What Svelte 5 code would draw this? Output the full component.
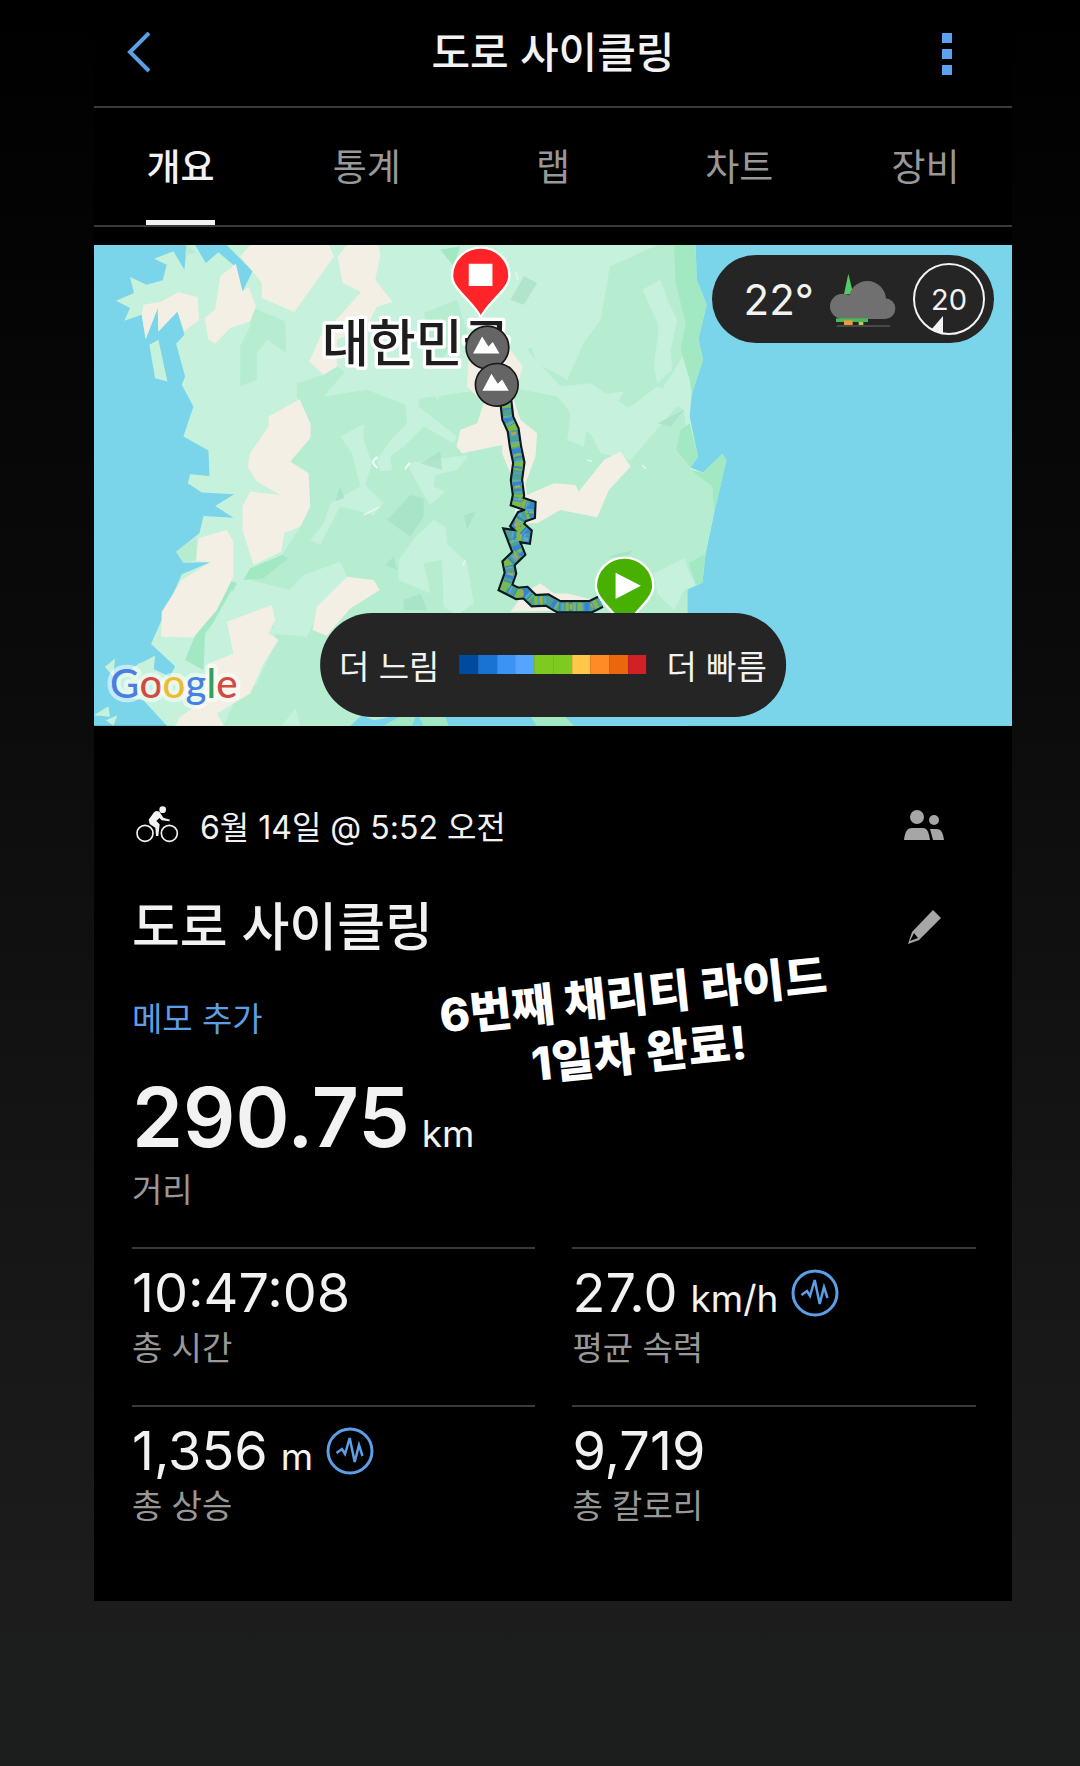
<script>
  const tabs = ['개요', '통계', '랩', '차트', '장비'];
  let active = $state('개요');

  const speedScale = [
    '#004a9f', '#1873d3', '#3b93f3', '#55a5ff', '#7fca20',
    '#7fca20', '#ffc84a', '#ff8a26', '#ea670c', '#d31f26'
  ];

  const stats = [
    { value: '10:47:08', unit: '', label: '총 시간', chart: false },
    { value: '27.0', unit: 'km/h', label: '평균 속력', chart: true },
    { value: '1,356', unit: 'm', label: '총 상승', chart: true },
    { value: '9,719', unit: '', label: '총 칼로리', chart: false }
  ];

  const route =
    'M616,485 L622,535 L638,570 L645,620 L655,668 L648,720 L654,765 L650,785 L688,798 L687,822 L664,830 L650,855 L676,878 L674,892 L634,886 L645,915 L655,940 L624,970 L630,1000 L615,1042 L650,1060 L675,1058 L700,1082 L740,1080 L775,1100 L820,1100 L870,1100 L900,1085';
</script>

<main class="page">
  <article class="panel">
    <header class="bar">
      <button class="icon-button back" aria-label="뒤로">
        <svg width="26" height="42" viewBox="0 0 26 42"><path d="M23 1 4 20l19 19" fill="none" stroke="#5b9fe8" stroke-width="4" /></svg>
      </button>
      <h1>도로 사이클링</h1>
      <button class="icon-button more" aria-label="메뉴">
        <svg width="10" height="44" viewBox="0 0 10 44" fill="#5aa2f0"><path d="M0 2h10v10H0zM0 18h10v10H0zM0 34h10v10H0z" /></svg>
      </button>
    </header>

    <nav class="tabs">
      {#each tabs as tab}
        <button class="tab" class:active={active === tab} onclick={() => (active = tab)}>{tab}</button>
      {/each}
    </nav>

    <section class="map" aria-label="지도">
      <svg class="terrain" viewBox="12 16 2751 1441">
        <rect x="12" y="16" width="2751" height="1441" fill="#7bd5ea" />
        <path fill="#c6f1dc" d="M315,16 L290,16 283,90 250,35 192,57 230,75 218,122 170,135 120,112 132,160 78,183 120,205 103,243 155,225 167,298 203,205 205,275 262,215 283,285 258,312 285,410 275,435 310,500 280,590 355,632 358,708 300,703 293,730 335,758 432,763 375,798 430,833 340,828 328,880 258,935 280,968 360,967 275,1003 183,1212 255,1278 240,1310 150,1268 60,1330 100,1370 160,1380 230,1457 780,1457 L860,1425 1790,1425 1790,1048 1835,1028 1845,940 1870,820 1907,660 1895,642 1837,698 1800,683 1822,650 1797,530 1803,465 1837,360 1823,298 1848,195 1818,120 1815,16 L410,16 487,95 457,155 437,82 385,38 347,70Z" />
        <path fill="#c6f1dc" d="M178,315 L205,300 232,425 195,415Z M145,1272 L195,1247 190,1300Z M12,1425 L55,1398 60,1430Z M48,1440 L82,1425 70,1457Z M45,1280 L75,1255 70,1310Z" />

        <!-- forest -->
        <g fill="#b6edd1">
          <path d="M620,430 L700,405 740,380 830,450 960,480 1250,440 1400,470 1530,620 1640,640 1720,480 1780,510 1800,690 1865,740 1870,820 1845,940 1790,1048 1790,1457 400,1457 430,1390 500,1330 560,1200 540,1150 600,1050 480,1020 575,945 630,860 660,800 650,700 600,665 660,560 620,470Z" />
          <path d="M480,200 L585,245 588,340 530,300 500,340 500,420 450,440 450,320 480,260Z" />
          <path d="M1330,230 L1480,190 1560,80 1700,16 1780,16 1790,330 1700,470 1640,520 1500,430 1410,440 1310,330 1380,290Z" />
          <path d="M1000,220 L1100,180 1130,280 1040,370Z" />
          <path d="M260,935 L320,890 318,960 280,968Z M290,16 L320,40 285,45Z" />
        </g>
        <g fill="#a2e9c3">
          <path d="M1750,16 L1815,16 1818,120 1848,195 1823,298 1837,360 1803,465 1797,420 1770,330 1785,250 1755,130Z" />
          <path d="M1770,570 L1797,550 1822,650 1800,683 1757,630Z M1837,698 L1895,642 1907,660 1870,820 1865,740 1800,690Z M1795,970 L1845,940 1835,1028 1815,1035Z" />
          <path d="M415,1020 L440,1030 400,1110 345,1180 340,1290 285,1260 330,1150Z M480,985 L575,945 595,955 520,1015 460,1020Z M1050,30 L1110,20 1090,80Z" />
        </g>

        <!-- valleys -->
        <g fill="#c6f1dc">
          <path d="M700,470 L760,400 960,390 985,430 985,500 1100,590 1090,610 1000,560 940,620 900,650 905,690 870,695 860,660 900,600 950,550 945,495 830,450Z" />
          <path d="M750,590 L820,553 820,600 845,670 825,735 880,790 850,825 750,800 690,915 660,900 700,850 720,790 810,740 785,640Z" />
          <path d="M950,670 L1060,655 1135,645 1100,690 1035,705 1030,740 1065,755 1020,795 980,730Z" />
          <path d="M975,890 L1030,840 1065,860 1070,910 1130,970 1150,1090 1100,1125 1060,1100 1055,960 1000,970 1020,1060 925,1020 925,960Z" />
          <path d="M640,1005 L750,965 780,1030 690,1110 650,1190 545,1180 560,1090Z M345,1190 L425,1050 480,1110 410,1150 420,1230 360,1250Z" />
          <path d="M1330,130 L1390,60 1450,40 1560,70 1530,240 1480,310 1430,420 1340,370 1310,290Z" />
          <path d="M1410,480 L1600,455 1570,510 1620,500 1700,440 1785,470 1620,660 1530,640 1490,560 1480,620 1430,600 1440,520Z" />
          <path d="M1655,150 L1710,120 1730,180 1760,240 1740,330 1745,390 1700,430 1690,380 1705,260Z M1690,1000 L1780,955 1810,1030 1780,1050 1750,1110 1700,1060Z M1015,420 L1110,390 1040,480Z" />
          <path d="M575,1457 L615,1405 630,1457Z" />
        </g>
        <g fill="#a5dfc3" opacity=".65">
          <path d="M735,785 L750,738 762,775Z M890,840 L960,765 1000,775 1000,830 960,890Z M885,975 L910,950 920,990Z M1120,825 L1155,815 1130,870Z M990,670 L1050,635 1055,690Z M1260,180 L1300,110 1340,130 1300,195Z M1700,550 L1780,510 1740,560Z M1550,950 L1630,930 1600,955Z M940,1080 L990,1060 1010,1110 940,1110Z" />
        </g>

        <!-- lowlands -->
        <g fill="#f3efe4">
          <path d="M450,50 L480,16 715,16 732,50 612,217 515,175 515,130 487,95Z" />
          <path d="M742,50 L770,16 865,16 870,50 855,120 907,187 860,200 830,260 740,300 740,380 700,405 657,365 690,290 760,215 812,157 757,130Z" />
          <path d="M343,235 L375,210 390,110 437,72 457,155 475,140 497,200 480,245 420,265 375,312 355,300Z" />
          <path d="M155,225 L160,195 215,185 265,157 322,172 327,240 283,275 262,215 205,275 203,205 167,298Z" />
          <path d="M535,530 L628,478 662,555 660,595 600,665 655,700 660,800 630,860 583,878 572,935 490,975 457,870 457,800 480,755 570,765 500,725 472,680 480,640 535,560Z" />
          <path d="M325,895 L410,870 430,905 430,1010 380,1110 310,1192 213,1190 215,1115 275,1020 360,967 318,962Z" />
          <path d="M680,1100 L770,1010 850,1020 868,1050 780,1105 710,1187 667,1170Z" />
          <path d="M410,1145 L545,1095 555,1140 535,1180 565,1200 520,1270 480,1360 380,1420 400,1457 255,1457 270,1430 330,1390 355,1270 430,1240Z" />
          <path d="M1135,350 L1260,330 1297,380 1270,480 1290,540 1340,580 1335,650 1305,730 1310,765 1390,730 1455,735 1465,755 1540,660 1590,635 1620,680 1555,750 1520,832 1410,810 1340,850 1270,850 1280,750 1235,640 1235,615 1115,640 1098,620 1110,570 1160,550 1180,490 1130,440Z" />
          <path d="M1300,1060 L1350,1030 1390,1060 1430,1060 1510,1080 1500,1110 1260,1115Z" />
        </g>
        <g fill="none" stroke="#f4fbf6" stroke-width="6">
          <path d="M862,652 Q835,665 862,684 M944,688 L958,668" />
          <path d="M1125,960 L1118,975 M1490,660 L1505,665 M1655,675 L1665,687 M820,825 L865,802 M1275,95 L1282,120" stroke-width="3" />
        </g>
        <path fill="#7bd5ea" d="M780,1457 L815,1425 850,1440 900,1430 2763,1420 2763,1457Z" />
        <path fill="#a2e9c3" d="M880,1457 L930,1428 975,1430 965,1457Z M985,1430 L1065,1430 1075,1457 1000,1457Z M1320,1430 L1420,1425 1450,1457 1340,1457Z" />

        <text class="country" x="695" y="368">대한민국</text>

        <g transform="translate(630 0)">
          <path d={route} fill="none" stroke="#0b1a20" stroke-width="40" />
          <path d={route} fill="none" stroke="#4f9f92" stroke-width="27" />
          <path d={route} fill="none" stroke="#7dbb42" stroke-width="26" stroke-dasharray="19 24 8 13 26 31" />
          <path d={route} fill="none" stroke="#3583d2" stroke-width="26" stroke-dasharray="6 15 3 22 14 9 4 27" />
          <path d={route} fill="none" stroke="#58aadd" stroke-width="22" stroke-dasharray="3 17 5 33" stroke-dashoffset="12" />
          <path d={route} fill="none" stroke="#b5a54d" stroke-width="16" stroke-dasharray="5 91 8 57" />

          <g stroke="#fff" stroke-width="7">
            <path fill="#47b000" d="M972,1167 C948,1115 886,1082 886,1037 A86,84 0 0 1 1058,1037 C1058,1082 996,1115 972,1167Z" />
            <path fill="#ff2427" d="M541,233 C520,186 455,150 455,108 A86,84 0 0 1 627,108 C627,150 562,186 541,233Z" />
          </g>
          <path fill="#fff" d="M945,998 L1021,1037 945,1077Z M505,72h71v67h-71z" />
          <g fill="#656565" stroke="#171717" stroke-width="5">
            <circle cx="561" cy="323" r="64" />
            <circle cx="589" cy="435" r="64" />
          </g>
          <path fill="#fff" d="M518,341 L545,290 564,320 577,307 597,341Z M546,453 L573,402 592,432 605,419 625,453Z" />
        </g>

        <text class="google" x="60" y="1375"><tspan fill="#4a7fe0">G</tspan><tspan fill="#d34a40">o</tspan><tspan fill="#eebb2c">o</tspan><tspan fill="#4a7fe0">g</tspan><tspan fill="#34a060">l</tspan><tspan fill="#d34a40">e</tspan></text>
      </svg>

      <div class="weather">
        <span class="temperature">22°</span>
        <svg width="66" height="56" viewBox="0 0 198 168">
          <path fill="#50cd62" d="M42,70 L55,8 70,70Z" />
          <g fill="#707070">
            <circle cx="38" cy="106" r="38" />
            <circle cx="112" cy="86" r="56" />
            <circle cx="165" cy="113" r="31" />
            <path d="M38 90h127v54H38z" />
          </g>
          <path fill="#48b85a" d="M18,142h96v11H18z" />
          <path fill="#eb9b3d" d="M42,148h26v14H42z" />
          <path fill="#b9cf4f" d="M86,153h14v9H86z" />
          <path stroke="#555" stroke-width="5" d="M20,165 H180" />
        </svg>
        <span class="wind">
          <svg viewBox="0 0 74 74"><circle cx="37" cy="37" r="35" fill="none" stroke="#f4f4f4" stroke-width="2" /><path fill="#f4f4f4" d="M31 54v18L19 68z" /></svg>
          20
        </span>
      </div>

      <div class="legend">
        <span>더 느림</span>
        <span class="scale">
          {#each speedScale as color}<i style:background={color}></i>{/each}
        </span>
        <span>더 빠름</span>
      </div>
    </section>

    <section class="details">
      <div class="row meta">
        <svg width="43" height="37" viewBox="136 78 129 111">
          <g fill="none" stroke="#f2f2f2" stroke-width="5"><circle cx="163" cy="160" r="24" /><circle cx="236" cy="160" r="24" /></g>
          <circle cx="216" cy="89" r="10" fill="#f2f2f2" />
          <path fill="#f2f2f2" d="M174,119 L190,97 Q198,90 207,96 L218,113 238,119 236,124 213,121 206,114 197,123 207,133 203,168 196,168 194,143 177,132Z" />
        </svg>
        <time>6월 14일 @ 5:52 오전</time>
        <button class="icon-button end" aria-label="공개 설정">
          <svg width="41" height="30" viewBox="0 0 41 30" fill="#a6a6a6"><circle cx="13" cy="7" r="7" /><circle cx="30" cy="10" r="5" /><path d="M0 30c1-8 3-12 8-12h11c4 0 6 4 7 12zM26 19h6c5 0 7 3 8 11H29z" /></svg>
        </button>
      </div>

      <div class="row name">
        <h2>도로 사이클링</h2>
        <button class="icon-button end" aria-label="이름 편집">
          <svg width="36" height="36" viewBox="0 0 36 36"><path fill="#a6a6a6" fill-rule="evenodd" d="M1 34 5 22 26 0l8 8-22 22zM3 31l8-3-4-5z" /></svg>
        </button>
      </div>

      <a class="memo" href="#memo">메모 추가</a>

      <p class="note">6번째 채리티 라이드<br />1일차 완료!</p>

      <div class="distance"><strong>290.75</strong><span>km</span></div>
      <div class="label">거리</div>

      <dl class="stats">
        {#each stats as stat}
          <div class="stat">
            <dt class="label">{stat.label}</dt>
            <dd>
              <span class="figure">{stat.value}</span>
              {#if stat.unit}<span class="unit">{stat.unit}</span>{/if}
              {#if stat.chart}
                <button class="icon-button chart" aria-label="{stat.label} 차트">
                  <svg width="48" height="48" viewBox="0 0 48 48" fill="none" stroke="#5d9fe6" stroke-width="3"><circle cx="24" cy="24" r="22" /><path stroke-width="2.5" d="M10.5 26l5.5-4 3 5L23.7 11l5 24L33 18l3.5 11" /></svg>
                </button>
              {/if}
            </dd>
          </div>
        {/each}
      </dl>
    </section>
  </article>
</main>

<style>
  :global(body) {
    margin: 0;
    background: #1c1d1d;
  }
  .page {
    box-sizing: border-box;
    min-height: 100vh;
    padding: 0 6.3% 0 8.7%;
    background: linear-gradient(#000 0, #0a0a0a 35%, #161616 70%, #1c1c1c 90%, #1c1e1e 100%);
    color: #f2f2f2;
    font-family: Inter, 'Noto Sans CJK KR', sans-serif;
  }
  .panel {
    background: #000;
  }
  h1, h2, p, dl, dd {
    margin: 0;
    font-weight: 500;
  }
  button {
    padding: 0;
    border: 0;
    background: none;
    color: inherit;
    font: inherit;
    cursor: pointer;
  }
  svg {
    display: block;
  }

  .bar {
    display: grid;
    grid-template-columns: 1fr auto 1fr;
    align-items: center;
    height: 106px;
    padding: 0 32px;
    border-bottom: 2px solid #3a3a3a;
  }
  .back {
    justify-self: start;
  }
  .more {
    justify-self: end;
    margin-right: 28px;
  }
  h1 {
    font-size: 42px;
    line-height: 60px;
  }

  .tabs {
    display: flex;
    justify-content: space-between;
    height: 117px;
    padding: 0 52px;
    border-bottom: 2px solid #3a3a3a;
  }
  .tab {
    min-width: 69px;
    padding-bottom: 4px;
    border-top: 5px solid transparent;
    border-bottom: 5px solid transparent;
    color: #989898;
    font-size: 37px;
  }
  .tab.active {
    border-bottom-color: #f2f2f2;
    color: #f2f2f2;
    font-weight: 500;
  }

  .map {
    position: relative;
    margin-top: 18px;
  }
  .terrain {
    width: 100%;
  }
  .country {
    font-size: 153px;
    font-weight: 500;
    fill: #1d1d1d;
    stroke: #fff;
    stroke-width: 20px;
    stroke-linejoin: round;
    paint-order: stroke;
  }
  .google {
    font-family: Lato, sans-serif;
    font-size: 121px;
    font-weight: 500;
    stroke: rgb(255 255 255 / 55%);
    stroke-width: 26px;
    stroke-linejoin: round;
    paint-order: stroke;
  }
  .weather,
  .legend {
    position: absolute;
    display: flex;
    align-items: center;
    border-radius: 53px;
    background: #252525;
  }
  .weather {
    top: 10px;
    right: 18px;
    height: 88px;
    padding: 0 8px 0 32px;
    gap: 16px;
  }
  .temperature {
    font-size: 42px;
  }
  .wind {
    position: relative;
    display: grid;
    place-items: center;
    width: 74px;
    height: 74px;
    font-size: 29px;
  }
  .wind svg {
    position: absolute;
    inset: 0;
  }
  .legend {
    bottom: 9px;
    left: 50%;
    transform: translateX(-50%);
    height: 104px;
    padding: 0 19px;
    gap: 20px;
    font-size: 33px;
    white-space: nowrap;
  }
  .scale {
    display: flex;
    width: 187px;
    height: 19px;
  }
  .scale i {
    flex: 1;
  }

  .details {
    position: relative;
    padding: 75px 36px 38px 38px;
  }
  .row {
    display: flex;
    align-items: center;
  }
  .meta {
    height: 48px;
    padding-left: 4px;
    gap: 21px;
    font-size: 32px;
  }
  .end {
    display: grid;
    place-items: center;
    width: 42px;
    margin-left: auto;
    margin-right: 30px;
  }
  .name {
    height: 64px;
    margin-top: 47px;
  }
  h2 {
    font-size: 52px;
    line-height: 64px;
  }
  .memo {
    display: block;
    width: fit-content;
    margin-top: 35px;
    color: #5d9fe6;
    font-size: 33px;
    line-height: 48px;
    text-decoration: none;
  }
  .note {
    position: absolute;
    top: 240px;
    left: 59%;
    transform: translateX(-50%) rotate(-6deg);
    color: #fff;
    font-size: 46px;
    font-weight: 800;
    line-height: 58px;
    text-align: center;
    white-space: nowrap;
  }
  .distance {
    display: flex;
    align-items: baseline;
    gap: 12px;
    height: 94px;
    margin-top: 29px;
    line-height: 92px;
  }
  .distance strong {
    font-size: 82px;
    font-weight: 600;
  }
  .distance span,
  .unit {
    font-size: 37px;
  }
  .label {
    color: #989898;
    font-size: 33px;
    font-weight: 400;
    line-height: 48px;
  }
  .stats {
    display: grid;
    grid-template-columns: 1fr 1fr;
    column-gap: 37px;
    margin-top: 33px;
  }
  .stat {
    display: flex;
    flex-direction: column-reverse;
    justify-content: flex-end;
    gap: 2px;
    padding: 15px 0 33px;
    border-top: 2px solid #3a3a3a;
  }
  dd {
    display: flex;
    align-items: baseline;
    gap: 13px;
    height: 58px;
    line-height: 58px;
    font-weight: 400;
  }
  .figure {
    font-size: 54px;
  }
  .chart {
    align-self: center;
  }
</style>
